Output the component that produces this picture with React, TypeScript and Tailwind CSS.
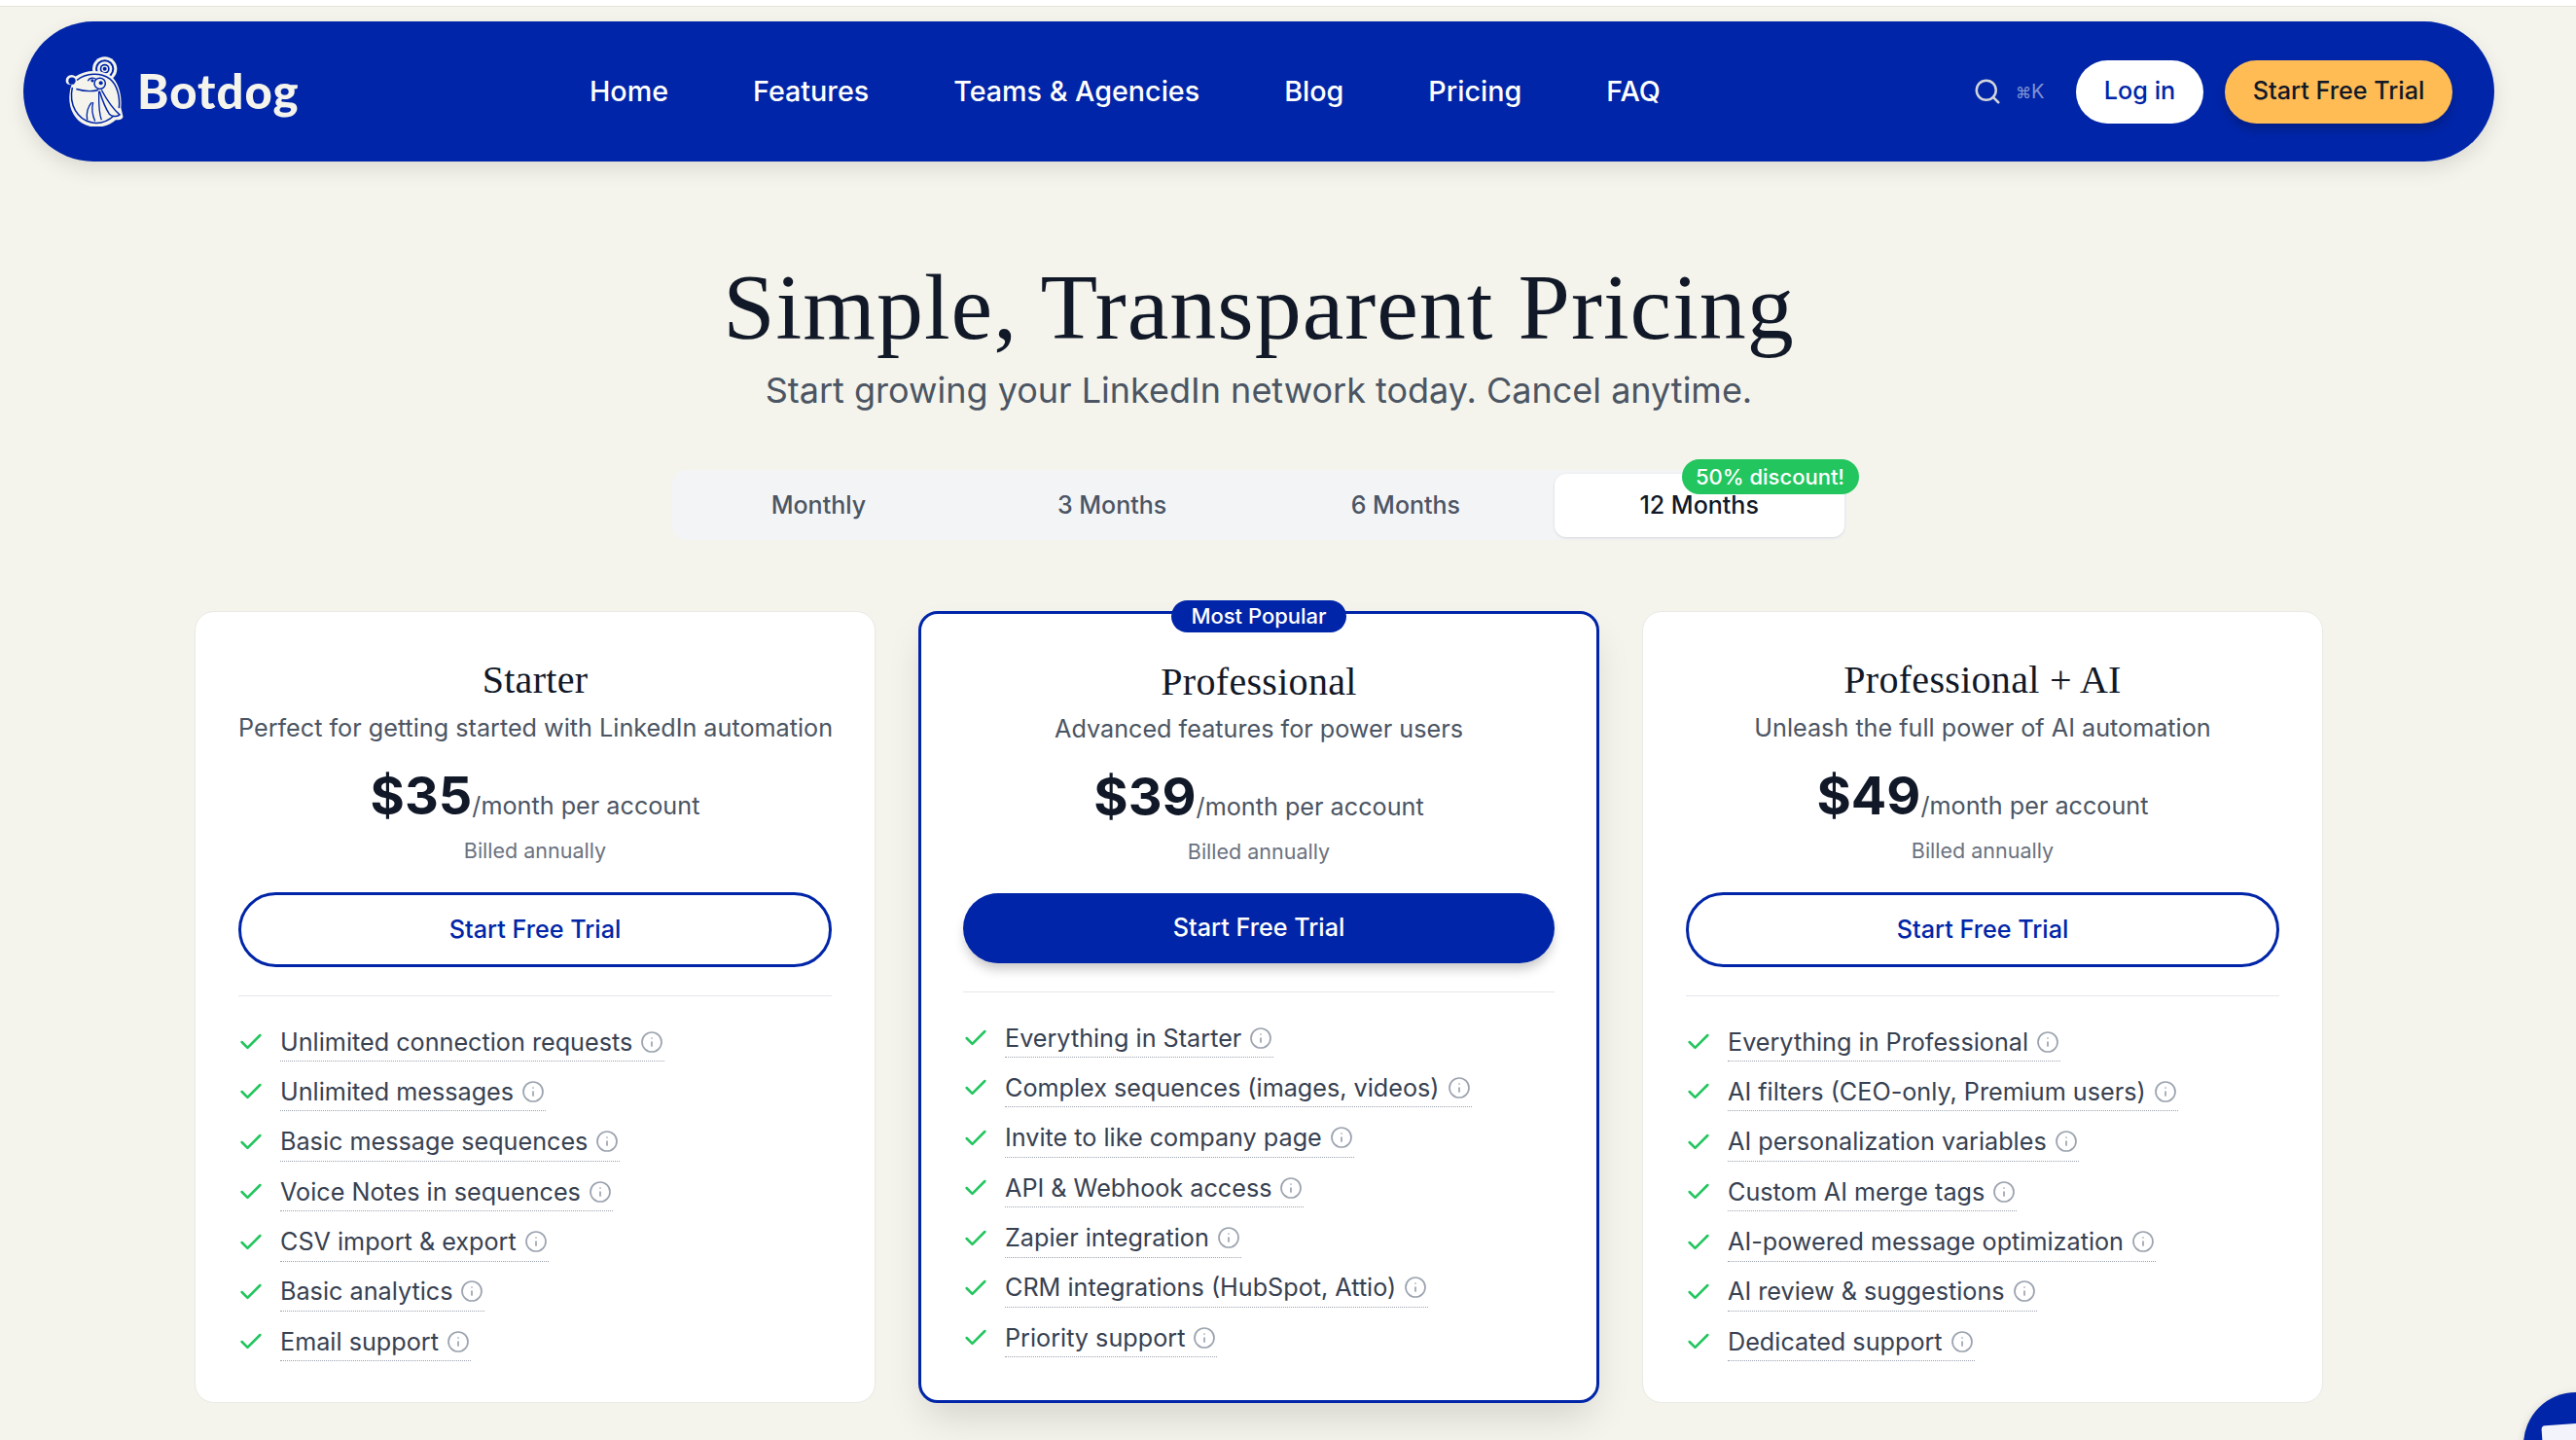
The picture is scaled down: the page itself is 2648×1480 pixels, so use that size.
import React from "react";
import { Check, Info, Search } from "lucide-react";

const plans = [
  {
    name: "Starter",
    desc: "Perfect for getting started with LinkedIn automation",
    price: "$35",
    popular: false,
    features: ["Unlimited connection requests", "Unlimited messages", "Basic message sequences", "Voice Notes in sequences", "CSV import & export", "Basic analytics", "Email support"],
  },
  {
    name: "Professional",
    desc: "Advanced features for power users",
    price: "$39",
    popular: true,
    features: ["Everything in Starter", "Complex sequences (images, videos)", "Invite to like company page", "API & Webhook access", "Zapier integration", "CRM integrations (HubSpot, Attio)", "Priority support"],
  },
  {
    name: "Professional + AI",
    desc: "Unleash the full power of AI automation",
    price: "$49",
    popular: false,
    features: ["Everything in Professional", "AI filters (CEO-only, Premium users)", "AI personalization variables", "Custom AI merge tags", "AI-powered message optimization", "AI review & suggestions", "Dedicated support"],
  },
];

function Logo() {
  const blue = "#0025a8";
  const cream = "#f4f4ec";
  return (
    <svg width="60" height="72" viewBox="50 55 180 215" className="shrink-0">
      <circle cx="172" cy="93" r="38" fill={cream} />
      <circle cx="172" cy="93" r="29" fill={blue} />
      <circle cx="172" cy="93" r="23" fill={cream} />
      <circle cx="172" cy="93" r="15" fill={blue} />
      <circle cx="172" cy="93" r="10" fill={cream} />
      <circle cx="172" cy="93" r="6" fill={blue} />
      <path d="M52 130a18 18 0 0 1 30-14c30-22 80-22 108-2 24 18 36 60 32 98l6 26c2 8-8 14-22 12-22 20-60 30-92 16-40-16-56-60-50-100 1-10 3-18 6-24-12 0-18-4-18-12z" fill={cream} />
      <path d="M86 128c28-24 76-24 102-4 22 18 32 54 28 90M72 150c-12 56 18 98 58 108 26 6 52-4 72-22" fill="none" stroke={blue} strokeWidth="4.5" />
      <circle cx="71" cy="130" r="11" fill={blue} />
      <path d="M80 136c24-6 46-4 68 2-2 8-2 14 2 18-24 6-52 2-70-6z" fill={cream} stroke={cream} strokeWidth="2" />
      <path d="M120 130c4-10 18-12 26-4" fill="none" stroke={blue} strokeWidth="4" />
      <circle cx="134" cy="129" r="5" fill={blue} />
      <path d="M84 155c24 7 50 8 68 3" fill="none" stroke={blue} strokeWidth="4" />
      <path d="M162 158c14 26 30 54 56 76-10 8-24 6-32-2-12-18-22-44-30-70" fill={cream} stroke={blue} strokeWidth="4.5" />
      <path d="M154 162c0 30-2 62 8 88M132 196c-12 12-18 34-14 54M136 196c-4 16-2 40 6 58" fill="none" stroke={blue} strokeWidth="4" />
      <circle cx="157" cy="138" r="17" fill={cream} stroke={blue} strokeWidth="4.5" />
      <circle cx="160" cy="136" r="6" fill={blue} />
    </svg>
  );
}

function Plan({ plan }: { plan: (typeof plans)[number] }) {
  const p = plan.popular;
  return (
    <div
      className={
        p
          ? "relative w-[700px] h-[814px] rounded-[20px] bg-white border-[3px] border-[#0025a8] px-[43px] pt-[45px] shadow-[0_20px_40px_-8px_rgba(0,0,0,0.14)]"
          : "relative w-[700px] h-[814px] rounded-[20px] bg-white border border-[#e9e9e5] px-[44px] pt-[45px]"
      }
    >
      {p && (
        <div className="absolute left-1/2 -translate-x-1/2 top-[-14px] w-[180px] h-[33px] rounded-full bg-[#0025a8] text-white text-[22px] leading-[33px] font-medium text-center">
          Most Popular
        </div>
      )}
      <div className="text-center text-[40px] leading-[50px] tracking-[0.3px] text-[#111827] font-['Liberation_Serif',serif]">{plan.name}</div>
      <div className={p ? "text-center text-[25.2px] leading-[36px] mt-[5px] text-[#4b5563] whitespace-nowrap" : "text-center text-[25.2px] leading-[36px] mt-[6px] text-[#4b5563] whitespace-nowrap"}>{plan.desc}</div>
      <div className="flex items-baseline justify-center mt-[19px] h-[66px]">
        <span className="text-[54px] leading-[66px] font-bold text-[#111827]">{plan.price}</span>
        <span className="text-[25.2px] text-[#4b5563]">/month per account</span>
      </div>
      <div className="text-center text-[21.5px] leading-[30px] mt-[8px] text-[#6b7280]">Billed annually</div>
      <button
        className={
          p
            ? "block w-full h-[72px] mt-[28px] rounded-full bg-[#0025a8] text-white text-[25.2px] font-medium shadow-[0_8px_12px_-2px_rgba(0,0,0,0.22)]"
            : "block w-full h-[77px] mt-[28px] rounded-full bg-white border-[3px] border-[#0025a8] text-[#0025a8] text-[25.2px] font-medium"
        }
      >
        Start Free Trial
      </button>
      <div className={p ? "h-px bg-[#e5e7eb] mt-[29px]" : "h-px bg-[#e5e7eb] mt-[29px]"} />
      <ul className={p ? "flex flex-col gap-[14.4px] mt-[30px]" : "flex flex-col gap-[14.4px] mt-[30px]"}>
        {plan.features.map((f) => (
          <li key={f} className="flex items-start h-[37px]">
            <Check className="w-[28px] h-[28px] mt-[3px] -ml-[1px] shrink-0 text-[#22c55e]" strokeWidth={2.2} />
            <span className="ml-[16px] inline-flex items-center gap-[8px] h-[37px] pb-[3px] text-[25.2px] leading-[34px] text-[#374151] border-b border-dotted border-[#9ca3af] whitespace-nowrap">
              {f}
              <Info className="w-[24px] h-[24px] mr-[1px] text-[#9ca3af]" strokeWidth={1.7} />
            </span>
          </li>
        ))}
      </ul>
    </div>
  );
}

export default function App() {
  const tabs = ["Monthly", "3 Months", "6 Months", "12 Months"];
  return (
    <div className="relative h-[1480px] w-[2648px] overflow-hidden bg-[#f4f4ec] font-['Inter',sans-serif]">
      <div className="h-[7px] bg-white border-b border-[#e3e3da]" />
      <div className="w-[2588px]">
        <nav className="mt-[15px] ml-[24px] w-[2540px] h-[144px] rounded-full bg-[#0025a8] flex items-center pl-[43px] pr-[43px] shadow-[0_8px_20px_rgba(0,0,0,0.1)]">
          <div className="w-[539px] flex items-center">
            <Logo />
            <span className="ml-[14px] text-[49px] font-black text-[#f4f4ec] font-['Lato',sans-serif] tracking-[1px]">Botdog</span>
          </div>
          <div className="flex items-center gap-[87px] text-[28.7px] font-medium text-white">
            <span>Home</span>
            <span>Features</span>
            <span>Teams &amp; Agencies</span>
            <span>Blog</span>
            <span>Pricing</span>
            <span>FAQ</span>
          </div>
          <div className="ml-auto flex items-center">
            <Search className="w-[30px] h-[30px] text-[#d1d5db]" strokeWidth={2} />
            <span className="ml-[14px] w-[27px] text-[20px] text-white/50 whitespace-nowrap">
              <span className="text-[16px]">⌘</span>K
            </span>
            <button className="ml-[35px] w-[131px] h-[65px] rounded-full bg-white text-[#0025a8] text-[25.2px] font-medium">Log in</button>
            <button className="ml-[22px] w-[234px] h-[65px] rounded-full bg-[#ffbc54] text-[#111827] text-[25.2px] font-medium shadow-[0_6px_10px_rgba(0,0,0,0.2)]">Start Free Trial</button>
          </div>
        </nav>

        <h1 className="mt-[93px] text-center text-[96px] leading-[114px] tracking-[1px] text-[#111827] font-['Liberation_Serif',serif]">Simple, Transparent Pricing</h1>
        <p className="mt-[3px] text-center text-[36px] leading-[50px] text-[#4b5563]">Start growing your LinkedIn network today. Cancel anytime.</p>

        <div className="relative mx-auto mt-[57px] w-[1207px] h-[72px] rounded-[14px] bg-[#f3f4f6] grid grid-cols-4 py-[4px]">
          {tabs.map((t, i) => (
            <div
              key={t}
              className={
                i === 3
                  ? "flex items-center justify-center h-[65px] mx-[2px] rounded-[12px] bg-white text-[#111827] text-[25px] font-medium shadow-[0_1px_3px_rgba(0,0,0,0.12)]"
                  : "flex items-center justify-center h-[65px] rounded-[12px] text-[#4b5563] text-[25px] font-medium"
              }
            >
              {t}
            </div>
          ))}
          <div className="absolute right-[-13px] top-[-11px] w-[182px] h-[36px] rounded-full bg-[#22c55e] text-white text-[22px] leading-[36px] font-medium text-center">50% discount!</div>
        </div>

        <div className="mt-[73px] ml-[200px] flex gap-[44px]">
          {plans.map((p) => (
            <Plan key={p.name} plan={p} />
          ))}
        </div>
      </div>

      <div className="absolute left-[2594px] top-[1431px] w-[108px] h-[108px] rounded-full bg-[#0025a8] shadow-[0_2px_8px_rgba(0,0,0,0.15)]">
        <div className="absolute left-[20px] top-[32px] w-[70px] h-[50px] rounded-[4px] bg-[#f3f4fb] -rotate-[4deg]" />
      </div>
    </div>
  );
}
